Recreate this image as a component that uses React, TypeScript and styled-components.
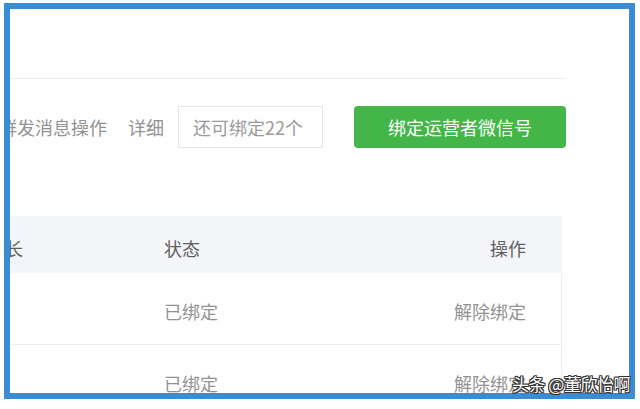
import React from "react";
import styled, { createGlobalStyle } from "styled-components";

const Global = createGlobalStyle`
  html, body { margin: 0; padding: 0; background: #ffffff; }
  body {
    font-family: "Noto Sans CJK SC", "Noto Sans", "Liberation Sans", sans-serif;
    width: 640px; height: 409px; overflow: hidden;
  }
`;

const Page = styled.div`
  position: relative;
  width: 640px;
  height: 409px;
  padding: 3px 0 0 4px;
  box-sizing: border-box;
`;

const Frame = styled.div`
  width: 631px;
  height: 396px;
  box-sizing: border-box;
  border: 6px solid #3a8dd5;
  background: #fff;
  overflow: hidden;
  display: flex;
  flex-direction: column;
`;

const TopBar = styled.div`
  width: 555px;
  height: 69px;
  flex: none;
  border-bottom: 1px solid #ebebeb;
`;

const Toolbar = styled.div`
  display: flex;
  align-items: center;
  height: 42px;
  margin-top: 27px;
  width: 556px;
  flex: none;
`;

const Label = styled.span<{ $shift?: number; $gap?: number }>`
  font-size: 18px;
  line-height: 1;
  color: #929292;
  white-space: nowrap;
  margin-left: ${(p) => p.$shift ?? 0}px;
  margin-right: ${(p) => p.$gap ?? 0}px;
`;

const QuotaBox = styled.div`
  width: 145px;
  height: 42px;
  box-sizing: border-box;
  border: 1px solid #e6e6e6;
  display: flex;
  align-items: center;
  padding-left: 14px;
  font-size: 18px;
  color: #9a9a9a;
  white-space: nowrap;
`;

const GreenButton = styled.button`
  margin-left: auto;
  width: 212px;
  height: 42px;
  border: none;
  border-radius: 4px;
  background: #44b549;
  color: #fff;
  font-family: inherit;
  font-size: 18px;
  padding: 0;
  cursor: pointer;
`;

const Table = styled.div`
  margin-top: 68px;
  width: 552px;
  flex: none;
  display: flex;
  flex-direction: column;
`;

const Row = styled.div<{ $head?: boolean }>`
  display: grid;
  grid-template-columns: 154px 1fr auto;
  align-items: center;
  height: ${(p) => (p.$head ? 57 : 72)}px;
  background: ${(p) => (p.$head ? "#f4f5f9" : "#fff")};
  border-bottom: 1px solid ${(p) => (p.$head ? "#f4f5f9" : "#ededed")};
  border-right: 1px solid ${(p) => (p.$head ? "#f4f5f9" : "#ededed")};
  box-sizing: border-box;
  padding-right: 35px;
  padding-top: ${(p) => (p.$head ? 8 : 4)}px;
  font-size: 18px;
  line-height: 1;
  color: ${(p) => (p.$head ? "#5f5f5f" : "#929292")};
`;

const Cell = styled.div<{ $shift?: number; $right?: boolean }>`
  white-space: nowrap;
  margin-left: ${(p) => p.$shift ?? 0}px;
  text-align: ${(p) => (p.$right ? "right" : "left")};
`;

const Watermark = styled.div`
  position: absolute;
  left: 512px;
  top: 374px;
  font-size: 17px;
  line-height: 20px;
  color: #fff;
  white-space: nowrap;
  letter-spacing: -0.5px;
  text-shadow: 1px 0 0 #333, -1px 0 0 #333, 0 1px 0 #333, 0 -1px 0 #333,
    1px 1px 0 #333, -1px -1px 0 #333, 1px -1px 0 #333, -1px 1px 0 #333;
`;

const rows = [
  { status: "已绑定", action: "解除绑定" },
  { status: "已绑定", action: "解除绑定" },
];

export default function App() {
  return (
    <Page>
      <Global />
      <Frame>
        <TopBar />
        <Toolbar>
          <Label $shift={-11} $gap={21}>群发消息操作</Label>
          <Label $gap={14}>详细</Label>
          <QuotaBox>还可绑定22个</QuotaBox>
          <GreenButton>绑定运营者微信号</GreenButton>
        </Toolbar>
        <Table>
          <Row $head>
            <Cell $shift={-23}>时长</Cell>
            <Cell>状态</Cell>
            <Cell $right>操作</Cell>
          </Row>
          {rows.map((r, i) => (
            <Row key={i}>
              <Cell />
              <Cell>{r.status}</Cell>
              <Cell $right>{r.action}</Cell>
            </Row>
          ))}
        </Table>
      </Frame>
      <Watermark>头条 @董欣怡啊</Watermark>
    </Page>
  );
}
